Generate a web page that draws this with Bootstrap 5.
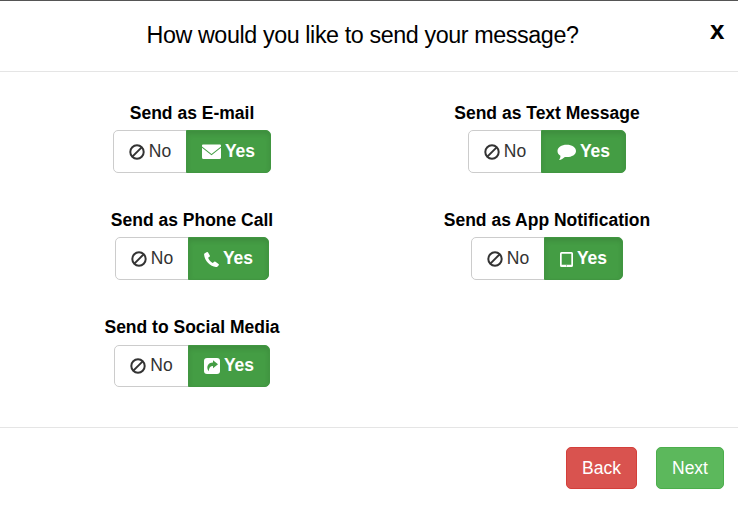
<!DOCTYPE html>
<html lang="en">
<head>
<meta charset="utf-8">
<meta name="viewport" content="width=device-width, initial-scale=1">
<title>Send message</title>
<link href="https://cdn.jsdelivr.net/npm/bootstrap@5.3.0/dist/css/bootstrap.min.css" rel="stylesheet">
<style>
body{font-family:"Liberation Sans",Arial,sans-serif;font-size:17.5px;line-height:25px;color:#000}
.dialog-panel{height:505px;border-top:1px solid #555}
.dialog-head{height:71px;border-bottom:1px solid #e5e5e5;padding:0 13.5px 2px 0}
.dialog-title{font-size:23.3px;letter-spacing:-.4px;line-height:32px;font-weight:400;padding-right:1px}
.dialog-close{font-size:26px;line-height:26px;font-weight:700;color:#000;width:14.5px;margin-bottom:10px}
.dialog-options{padding:28.6px 13.5px 0 14.5px;height:355px}
.option{height:107.3px}
.option-label{font-weight:700;margin-bottom:4.4px}
.choice{font-size:17.5px;line-height:25px;height:43px;padding:0 15px;border-radius:5px;gap:4px}
.choice-no{color:#333;border-color:#ccc;background:#fff;width:74px}
.choice-yes,.choice-yes:hover{color:#fff;font-weight:700;background:#449d44;border-color:#419641;box-shadow:inset 0 3px 5px rgba(0,0,0,.1)}
.option-last .choice{height:42px}
.option-last .choice-no{width:75px}
.dialog-foot{height:78px;border-top:1px solid #e5e5e5;padding:19px 14px 0;gap:19px}
.foot-btn{height:42px;font-size:17.5px;line-height:25px;padding:0 15px;border-radius:5px;color:#fff}
.foot-back{background:#d9534f;border-color:#d43f3a;width:71px}
.foot-next{background:#5cb85c;border-color:#4cae4c;width:68px}
svg{flex:none;display:block}
.choice svg{margin-top:1px}
.w-mail{width:85px}.w-phone{width:81px}.w-app{width:79px}.w-social{width:82px}
</style>
</head>
<body>
<svg width="0" height="0" class="d-none">
  <symbol id="ban" viewBox="0 0 16 16"><g fill="none" stroke="#333" stroke-width="2"><circle cx="8" cy="8" r="6.7"/><path d="M3.6 12.4 12.4 3.6"/></g></symbol>
</svg>
<div class="dialog-panel d-flex flex-column bg-white">
  <header class="dialog-head d-flex align-items-center">
    <h1 class="dialog-title flex-grow-1 text-center mb-0 ps-3">How would you like to send your message?</h1>
    <button type="button" class="dialog-close btn p-0 border-0" aria-label="Close">x</button>
  </header>
  <main class="dialog-options">
    <div class="row g-0">
      <div class="col-6 option d-flex flex-column align-items-center">
        <div class="option-label">Send as E-mail</div>
        <div class="btn-group">
          <button class="btn choice choice-no d-flex align-items-center justify-content-center"><svg width="16" height="16"><use href="#ban"/></svg>No</button>
          <button class="btn choice choice-yes w-mail d-flex align-items-center justify-content-center"><svg width="19" height="15" viewBox="0 0 19 15" fill="#fff"><path d="M1 .5h17q1 0 1 1v1L9.500 10.100 0 2.500v-1q0-1 1-1zM0 3.700l9.500 7.600 9.500-7.600v9.800q0 1.500-1.500 1.500h-16Q0 15 0 13.500z"/></svg>Yes</button>
        </div>
      </div>
      <div class="col-6 option d-flex flex-column align-items-center">
        <div class="option-label">Send as Text Message</div>
        <div class="btn-group">
          <button class="btn choice choice-no d-flex align-items-center justify-content-center"><svg width="16" height="16"><use href="#ban"/></svg>No</button>
          <button class="btn choice choice-yes w-mail d-flex align-items-center justify-content-center"><svg width="19" height="16" viewBox="0 0 19 16" fill="#fff"><path d="M9.700 .7C15 .7 19 3.300 19 6.900s-4 6.100-9.200 6.100q-1 0-1.900-.1C6 14.500 4.500 15.700 2 16c1-1.300 1.500-2.600 1.400-4.300C1.500 10.600.5 8.900.5 6.900.5 3.300 4.500.7 9.700.7z"/></svg>Yes</button>
        </div>
      </div>
      <div class="col-6 option d-flex flex-column align-items-center">
        <div class="option-label">Send as Phone Call</div>
        <div class="btn-group">
          <button class="btn choice choice-no d-flex align-items-center justify-content-center"><svg width="16" height="16"><use href="#ban"/></svg>No</button>
          <button class="btn choice choice-yes w-phone d-flex align-items-center justify-content-center"><svg width="15" height="15" viewBox="0 0 15 15" fill="#fff"><path d="M.8 1.200 3 .1q.7-.3 1.100.4l1.700 3q.4.8-.3 1.200L4.100 5.800c.8 2.300 2.400 4 4.700 5.200l1.400-1.300q.6-.5 1.300 0l3 2.200q.7.600.2 1.300L13.600 14.400q-.7.6-1.700.6C6.300 14.400.7 8.900.1 2.700Q0 1.700.8 1.200z"/></svg>Yes</button>
        </div>
      </div>
      <div class="col-6 option d-flex flex-column align-items-center">
        <div class="option-label">Send as App Notification</div>
        <div class="btn-group">
          <button class="btn choice choice-no d-flex align-items-center justify-content-center"><svg width="16" height="16"><use href="#ban"/></svg>No</button>
          <button class="btn choice choice-yes w-app d-flex align-items-center justify-content-center"><svg width="13" height="15" viewBox="0 0 13 15"><path fill="#fff" fill-rule="evenodd" d="M1.500 0h10q1.500 0 1.500 1.500v12q0 1.500-1.500 1.500h-10Q0 15 0 13.500v-12Q0 0 1.500 0zM1.700 1.800v10.900h9.600V1.800zM6 13.500v.7h1v-.7z"/></svg>Yes</button>
        </div>
      </div>
      <div class="col-6 option option-last d-flex flex-column align-items-center">
        <div class="option-label">Send to Social Media</div>
        <div class="btn-group">
          <button class="btn choice choice-no d-flex align-items-center justify-content-center"><svg width="16" height="16"><use href="#ban"/></svg>No</button>
          <button class="btn choice choice-yes w-social d-flex align-items-center justify-content-center"><svg width="16" height="16" viewBox="0 0 16 16"><rect width="16" height="16" rx="3" fill="#fff"/><path fill="#449d44" d="M9 2.200 14 6.300 9 10.300V8C6.300 8 5 9.800 4.700 13.300 1.800 9.500 3.700 4.700 9 4.600z"/></svg>Yes</button>
        </div>
      </div>
    </div>
  </main>
  <footer class="dialog-foot d-flex justify-content-end align-items-start">
    <button class="btn foot-btn foot-back">Back</button>
    <button class="btn foot-btn foot-next">Next</button>
  </footer>
</div>
<script src="https://cdn.jsdelivr.net/npm/bootstrap@5.3.0/dist/js/bootstrap.bundle.min.js"></script>
</body>
</html>
